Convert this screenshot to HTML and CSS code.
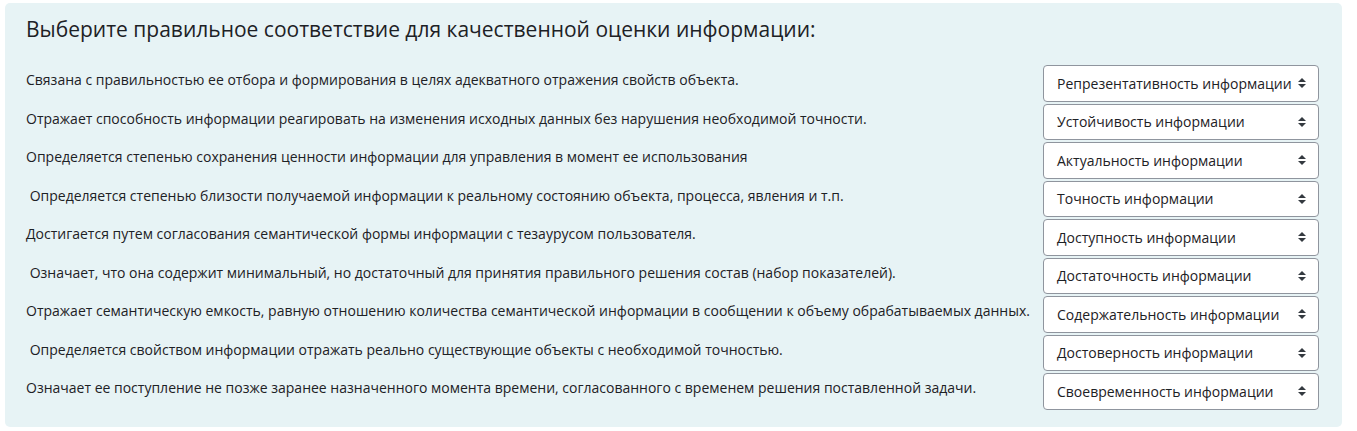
FILE: index.html
```html
<!DOCTYPE html>
<html lang="ru">
<head>
<meta charset="utf-8">
<title>Соответствие</title>
<link rel="stylesheet" href="styles.css">
</head>
<body>
<div class="que">
  <h2 class="qtext">Выберите правильное соответствие для качественной оценки информации:</h2>
  <div class="answers">
    <div class="text">Связана с правильностью ее отбора и формирования в целях адекватного отражения свойств объекта.</div>
    <div class="select"><span>Репрезентативность информации</span><svg class="arrow" viewBox="0 0 4 5" width="8" height="10"><path d="M2 0L0 2h4zm0 5L0 3h4z"/></svg></div>

    <div class="text">Отражает способность информации реагировать на изменения исходных данных без нарушения необходимой точности.</div>
    <div class="select"><span>Устойчивость информации</span><svg class="arrow" viewBox="0 0 4 5" width="8" height="10"><path d="M2 0L0 2h4zm0 5L0 3h4z"/></svg></div>

    <div class="text">Определяется степенью сохранения ценности информации для управления в момент ее использования</div>
    <div class="select"><span>Актуальность информации</span><svg class="arrow" viewBox="0 0 4 5" width="8" height="10"><path d="M2 0L0 2h4zm0 5L0 3h4z"/></svg></div>

    <div class="text">&nbsp;Определяется степенью близости получаемой информации к реальному состоянию объекта, процесса, явления и т.п.</div>
    <div class="select"><span>Точность информации</span><svg class="arrow" viewBox="0 0 4 5" width="8" height="10"><path d="M2 0L0 2h4zm0 5L0 3h4z"/></svg></div>

    <div class="text">Достигается путем согласования семантической формы информации с тезаурусом пользователя.</div>
    <div class="select"><span>Доступность информации</span><svg class="arrow" viewBox="0 0 4 5" width="8" height="10"><path d="M2 0L0 2h4zm0 5L0 3h4z"/></svg></div>

    <div class="text">&nbsp;Означает, что она содержит минимальный, но достаточный для принятия правильного решения состав (набор показателей).</div>
    <div class="select"><span>Достаточность информации</span><svg class="arrow" viewBox="0 0 4 5" width="8" height="10"><path d="M2 0L0 2h4zm0 5L0 3h4z"/></svg></div>

    <div class="text">Отражает семантическую емкость, равную отношению количества семантической информации в сообщении к объему обрабатываемых данных.</div>
    <div class="select"><span>Содержательность информации</span><svg class="arrow" viewBox="0 0 4 5" width="8" height="10"><path d="M2 0L0 2h4zm0 5L0 3h4z"/></svg></div>

    <div class="text">&nbsp;Определяется свойством информации отражать реально существующие объекты с необходимой точностью.</div>
    <div class="select"><span>Достоверность информации</span><svg class="arrow" viewBox="0 0 4 5" width="8" height="10"><path d="M2 0L0 2h4zm0 5L0 3h4z"/></svg></div>

    <div class="text">Означает ее поступление не позже заранее назначенного момента времени, согласованного с временем решения поставленной задачи.</div>
    <div class="select"><span>Своевременность информации</span><svg class="arrow" viewBox="0 0 4 5" width="8" height="10"><path d="M2 0L0 2h4zm0 5L0 3h4z"/></svg></div>
  </div>
</div>
</body>
</html>
```

FILE: styles.css
```css
html, body {
  margin: 0;
  padding: 0;
  background: #ffffff;
}
body {
  font-family: "Open Sans", "Noto Sans", sans-serif;
  color: #1d2125;
}
.que {
  margin: 3px 15px 0 5px;
  height: 424px;
  box-sizing: border-box;
  background: #e7f3f5;
  border-radius: 5px;
  padding: 12px 21px 0 21px;
}
.qtext {
  margin: 0 0 22px 0;
  font-size: 21px;
  font-weight: 400;
  line-height: 28px;
}
.answers {
  display: grid;
  grid-template-columns: 1017px 276px;
  row-gap: 2px;
}
.text {
  font-size: 14px;
  line-height: 22px;
  padding-top: 4px;
  white-space: nowrap;
}
.select {
  height: 36.5px;
  box-sizing: border-box;
  border: 1px solid #8f959e;
  border-radius: 4px;
  background: #ffffff;
  display: flex;
  align-items: center;
  justify-content: space-between;
  padding: 0 12px 0 13px;
  font-size: 14px;
  color: #1d2125;
}
.arrow {
  fill: #343a40;
  flex: none;
}
```
